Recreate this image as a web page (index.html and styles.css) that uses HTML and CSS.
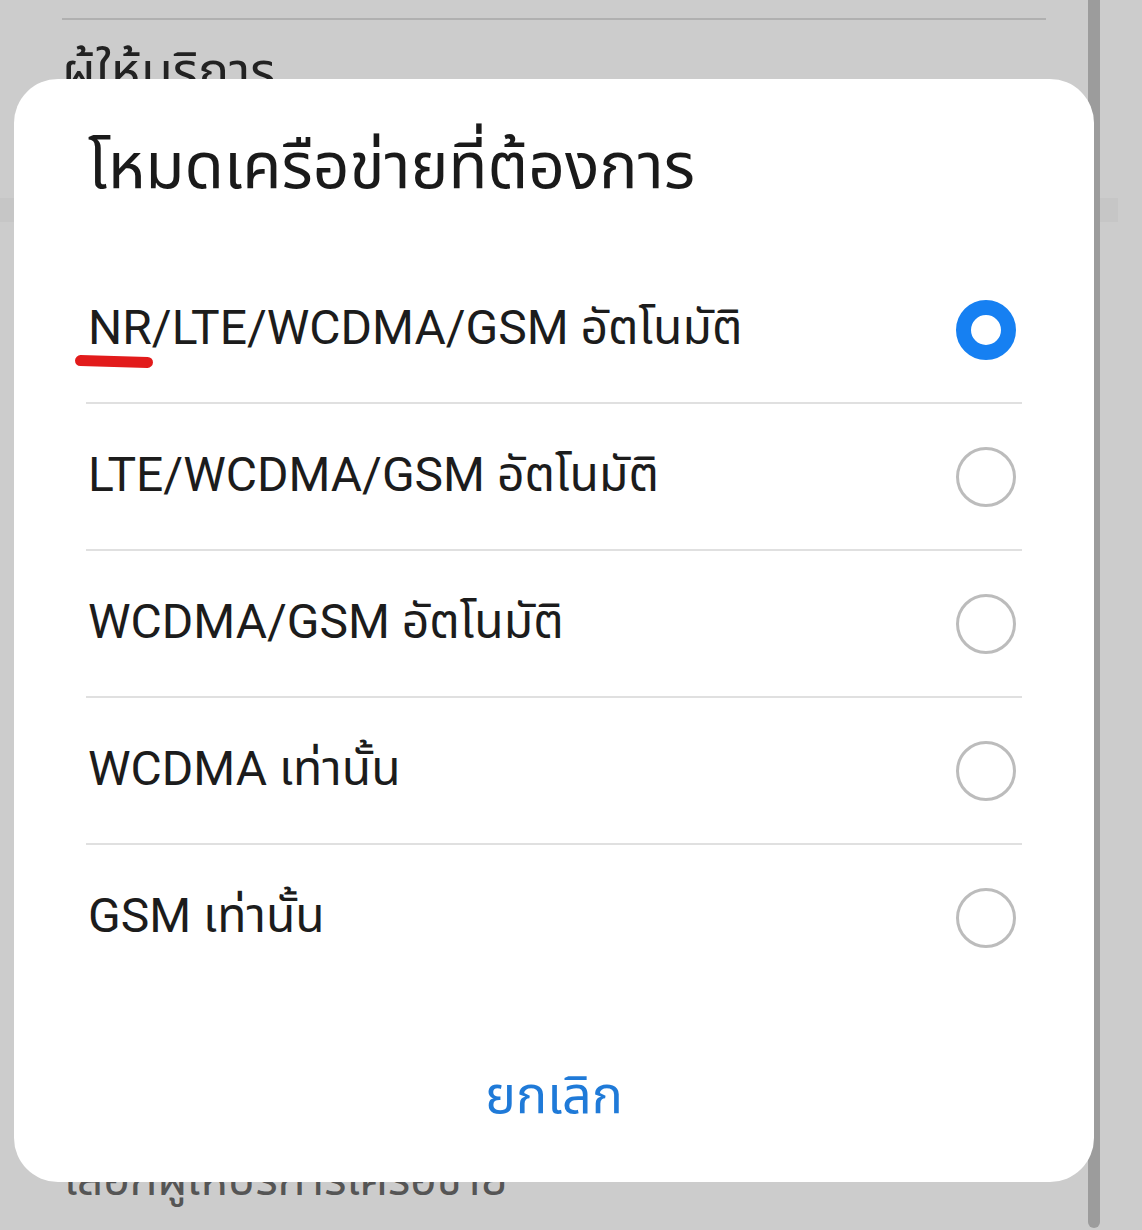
FILE: index.html
```html
<!DOCTYPE html>
<html lang="th">
<head>
  <meta charset="UTF-8" />
  <title>โหมดเครือข่ายที่ต้องการ</title>
  <link rel="stylesheet" href="styles.css">
</head>
<body>
  <div id="settings">
    <div class="settings-top">
      <div class="divider"></div>
      <div class="item">ผู้ให้บริการ</div>
    </div>
    <div class="band"></div>
    <div class="settings-bottom">
      <div class="item faint">เลือกผู้ให้บริการเครือข่าย</div>
    </div>
  </div>

  <div id="scrollbar"></div>

  <div id="dialog">
    <div class="title">โหมดเครือข่ายที่ต้องการ</div>
    <div class="options">
      <div class="option">
        <span class="label">NR/LTE/WCDMA/GSM อัตโนมัติ</span>
        <span class="radio checked"></span>
        <span class="mark"></span>
      </div>
      <div class="option">
        <span class="label">LTE/WCDMA/GSM อัตโนมัติ</span>
        <span class="radio"></span>
      </div>
      <div class="option">
        <span class="label">WCDMA/GSM อัตโนมัติ</span>
        <span class="radio"></span>
      </div>
      <div class="option">
        <span class="label">WCDMA เท่านั้น</span>
        <span class="radio"></span>
      </div>
      <div class="option last">
        <span class="label">GSM เท่านั้น</span>
        <span class="radio"></span>
      </div>
    </div>
    <div class="cancel">ยกเลิก</div>
  </div>
</body>
</html>
```

FILE: styles.css
```css
html {
	margin:0px;
	padding:0px;
	height:100%;
}

body {
	margin:0px;
	padding:0px;
	width:1142px;
	height:1230px;
	background:#cccccc;
	font-family:Roboto,"Noto Sans Thai","Noto Sans","Noto Sans CJK SC",sans-serif;
	color:#1c1c1c;
	overflow:hidden;
	position:relative;
}

#settings {
	height:100%;
	display:flex;
	flex-direction:column;
}

#settings .settings-top {
	padding:18px 96px 0px 62px;
	height:180px;
}

#settings .divider {
	height:2px;
	background:#b0b0b0;
}

#settings .item {
	font-size:52px;
	color:#222222;
	padding-top:14px;
}

#settings .band {
	height:24px;
	background:#c6c6c6;
	margin-right:24px;
}

#settings .settings-bottom {
	margin-top:auto;
	padding:0px 0px 14px 64px;
}

#settings .faint {
	color:#555555;
	font-size:46px;
}

#scrollbar {
	position:absolute;
	left:1088px;
	top:0px;
	width:12px;
	height:1228px;
	background:#9c9c9c;
	border-radius:0px 0px 6px 6px;
}

#dialog {
	position:absolute;
	left:14px;
	top:79px;
	width:1080px;
	height:1103px;
	background:#ffffff;
	border-radius:44px;
	display:flex;
	flex-direction:column;
	padding:0px 72px;
	box-sizing:border-box;
}

#dialog .title {
	font-size:64px;
	line-height:70px;
	margin:53px 0px 0px 2px;
	color:#1a1a1a;
}

#dialog .options {
	margin-top:55px;
}

#dialog .option {
	position:relative;
	height:145px;
	display:flex;
	align-items:center;
	justify-content:space-between;
	border-bottom:2px solid #e0e0e0;
}

#dialog .option.last {
	border-bottom:none;
}

#dialog .label {
	font-size:48px;
	padding-left:2px;
}

#dialog .radio {
	width:60px;
	height:60px;
	box-sizing:border-box;
	border:3px solid #bcbcbc;
	border-radius:50%;
	margin-right:6px;
}

#dialog .radio.checked {
	border:15px solid #1680f2;
}

#dialog .mark {
	position:absolute;
	left:-11px;
	top:99px;
	width:78px;
	height:11px;
	background:#e21b1b;
	border-radius:6px;
	transform:rotate(1.5deg);
}

#dialog .cancel {
	margin-top:auto;
	margin-bottom:46px;
	text-align:center;
	font-size:52px;
	color:#1f7ad8;
}
```
